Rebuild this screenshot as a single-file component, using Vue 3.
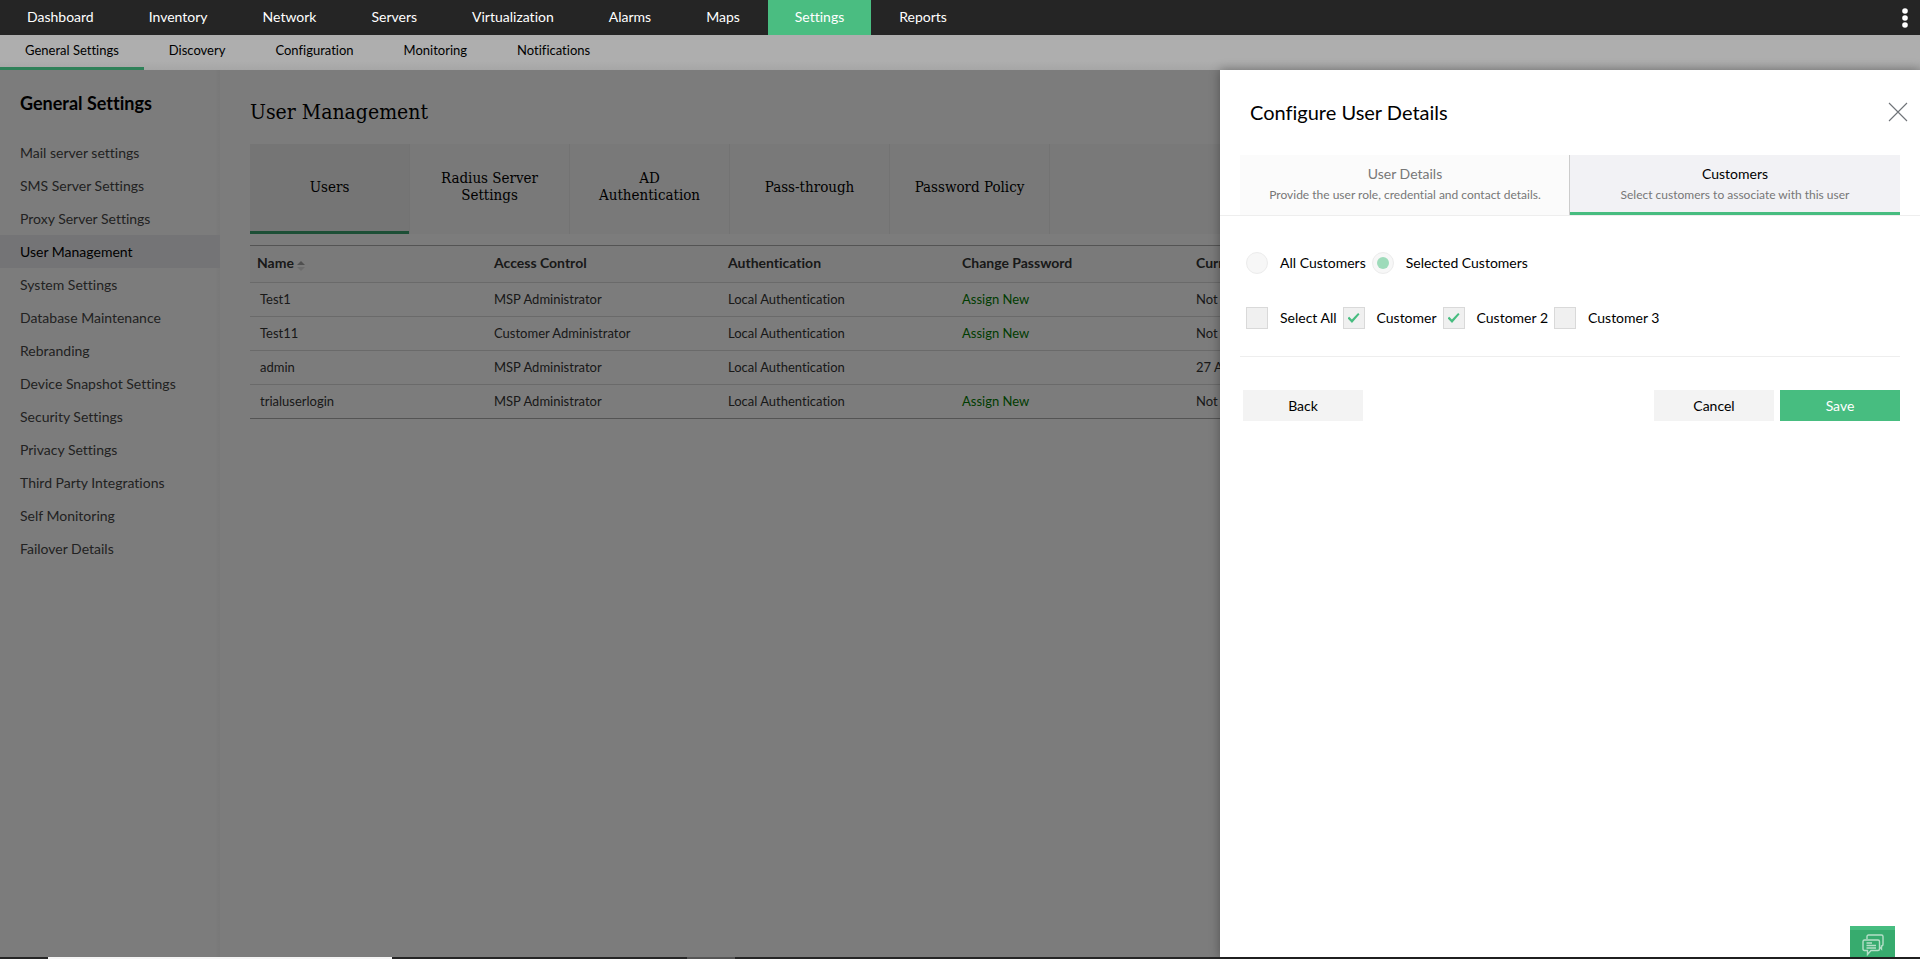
<template>
  <div class="app-page">
    <header class="topbar">
      <nav class="main-nav">
        <a
          v-for="item in mainMenu"
          :key="item"
          href="#"
          :class="{ active: item === 'Settings' }"
        >{{ item }}</a>
      </nav>
      <button class="more-btn" type="button" aria-label="More">
        <svg width="6" height="20" viewBox="0 0 6 20" fill="#fff">
          <circle cx="3" cy="3" r="2.8" />
          <circle cx="3" cy="10" r="2.8" />
          <circle cx="3" cy="17" r="2.8" />
        </svg>
      </button>
    </header>

    <nav class="sub-nav">
      <a
        v-for="item in subMenu"
        :key="item"
        href="#"
        :class="{ active: item === 'General Settings' }"
      >{{ item }}</a>
    </nav>

    <div class="workspace">
      <aside class="sidebar">
        <h2>General Settings</h2>
        <a
          v-for="item in sideMenu"
          :key="item"
          href="#"
          :class="{ active: item === 'User Management' }"
        >{{ item }}</a>
      </aside>

      <main class="content">
        <h1>User Management</h1>
        <div class="tabs">
          <button
            v-for="tab in tabs"
            :key="tab"
            type="button"
            :class="{ active: tab === 'Users' }"
          ><span>{{ tab }}</span></button>
        </div>

        <table class="user-table">
          <thead>
            <tr>
              <th class="name-col">
                Name
                <svg class="sort" width="8" height="10" viewBox="0 0 8 10">
                  <path d="M0 4 L4 0 L8 4 Z" fill="#a0a0a0" />
                  <path d="M0 6 L4 10 L8 6 Z" fill="#d8d8d8" />
                </svg>
              </th>
              <th>Access Control</th>
              <th>Authentication</th>
              <th>Change Password</th>
              <th class="rest-col">Curr</th>
            </tr>
          </thead>
          <tbody>
            <tr v-for="user in users" :key="user.name">
              <td>{{ user.name }}</td>
              <td>{{ user.access }}</td>
              <td>Local Authentication</td>
              <td><a v-if="user.assign" href="#">Assign New</a></td>
              <td>{{ user.login }}</td>
            </tr>
          </tbody>
        </table>
      </main>

      <div class="overlay"></div>

      <section class="panel">
        <div class="panel-head">
          <h2>Configure User Details</h2>
          <button class="close-btn" type="button" aria-label="Close">
            <svg width="20" height="20" viewBox="0 0 20 20" stroke="#6f7378" stroke-width="1.1">
              <path d="M1 1 L19 19 M19 1 L1 19" />
            </svg>
          </button>
        </div>

        <div class="steps">
          <button type="button">
            <span class="step-title">User Details</span>
            <span class="step-desc">Provide the user role, credential and contact details.</span>
          </button>
          <button type="button" class="active">
            <span class="step-title">Customers</span>
            <span class="step-desc">Select customers to associate with this user</span>
          </button>
        </div>

        <div class="form">
          <div class="options">
            <label><input v-model="scope" type="radio" value="all" />All Customers</label>
            <label><input v-model="scope" type="radio" value="selected" />Selected Customers</label>
          </div>
          <div class="options checks">
            <label v-for="c in customers" :key="c.label">
              <input v-model="c.checked" type="checkbox" />{{ c.label }}
            </label>
          </div>
          <div class="actions">
            <button type="button">Back</button>
            <button type="button" class="cancel">Cancel</button>
            <button type="button" class="save">Save</button>
          </div>
        </div>
      </section>

      <button class="chat-btn" type="button" aria-label="Chat">
        <svg width="22" height="22" viewBox="0 0 22 22" fill="none" stroke="#b5dfc8" stroke-width="1.4">
          <path d="M5 5 V2.5 Q5 1 6.500 1 H19.500 Q21 1 21 2.500 V10 Q21 12 19.500 12 V15 L17.500 13" />
          <path d="M2.500 6 H16 Q17.500 6 17.500 7.500 V15 Q17.500 16.500 16 16.500 H9 L5.500 20.500 V16.500 H2.500 Q1 16.500 1 15 V7.500 Q1 6 2.500 6 Z" />
          <path d="M4.500 9 H10 M4.500 11.500 H14 M4.500 14 H14" />
        </svg>
      </button>
    </div>

    <footer class="taskbar">
      <span class="task-search"></span>
      <span class="task-app"></span>
    </footer>
  </div>
</template>

<script setup>
import { ref } from 'vue'

const mainMenu = ['Dashboard', 'Inventory', 'Network', 'Servers', 'Virtualization', 'Alarms', 'Maps', 'Settings', 'Reports']
const subMenu = ['General Settings', 'Discovery', 'Configuration', 'Monitoring', 'Notifications']
const sideMenu = [
  'Mail server settings',
  'SMS Server Settings',
  'Proxy Server Settings',
  'User Management',
  'System Settings',
  'Database Maintenance',
  'Rebranding',
  'Device Snapshot Settings',
  'Security Settings',
  'Privacy Settings',
  'Third Party Integrations',
  'Self Monitoring',
  'Failover Details'
]
const tabs = ['Users', 'Radius Server Settings', 'AD Authentication', 'Pass-through', 'Password Policy']

const users = [
  { name: 'Test1', access: 'MSP Administrator', assign: true, login: 'Not' },
  { name: 'Test11', access: 'Customer Administrator', assign: true, login: 'Not' },
  { name: 'admin', access: 'MSP Administrator', assign: false, login: '27 A' },
  { name: 'trialuserlogin', access: 'MSP Administrator', assign: true, login: 'Not' }
]

const scope = ref('selected')
const customers = ref([
  { label: 'Select All', checked: false },
  { label: 'Customer', checked: true },
  { label: 'Customer 2', checked: true },
  { label: 'Customer 3', checked: false }
])
</script>

<style>
body {
  margin: 0;
}
</style>

<style scoped>
.app-page {
  display: flex;
  flex-direction: column;
  height: 100vh;
  overflow: hidden;
  font-family: Lato, "Open Sans", sans-serif;
  font-size: 14px;
  line-height: 17px;
  font-variant-ligatures: none;
  color: #000;
}

a {
  color: inherit;
  text-decoration: none;
}

button {
  margin: 0;
  padding: 0;
  border: 0;
  background: none;
  font: inherit;
  font-variant-ligatures: none;
  color: inherit;
  cursor: pointer;
}

svg {
  display: block;
}

h1,
h2 {
  margin: 0;
  font-weight: 400;
}

.topbar {
  display: flex;
  justify-content: space-between;
  flex: none;
  height: 35px;
  background: #252525;
  color: #fff;
}

.main-nav {
  display: flex;
  gap: 1px;
}

.main-nav a {
  padding: 8px 27px 10px;
}

.main-nav a.active {
  background: #4abd81;
}

.more-btn {
  padding: 0 12px;
}

.sub-nav {
  display: flex;
  flex: none;
  height: 35px;
  background: linear-gradient(#aeaeae 26px, #a6a6a6);
  font-size: 13px;
}

.sub-nav a {
  box-sizing: border-box;
  height: 35px;
  padding: 7px 25px;
}

.sub-nav a.active {
  border-bottom: 3px solid #2f8159;
}

.workspace {
  position: relative;
  display: flex;
  flex: 1;
  min-height: 0;
  background: #f9f9f9;
}

.sidebar {
  box-sizing: border-box;
  width: 220px;
  flex: none;
  background: linear-gradient(to left, #f1f1f1, #f9f9f9 5px);
  color: #444;
}

.sidebar h2 {
  padding: 22px 20px 21px;
  font-size: 18px;
  line-height: 23px;
  font-weight: 700;
  color: #000;
}

.sidebar a {
  display: block;
  padding: 8px 20px;
}

.sidebar a.active {
  background: #e9e9ed;
  color: #000;
}

.content {
  flex: 1;
  min-width: 0;
  padding: 0 30px;
}

.content h1 {
  padding: 30px 0 19px;
  font-family: "DejaVu Serif Condensed", "DejaVu Serif", serif;
  font-size: 21px;
  line-height: 25px;
}

.tabs {
  display: flex;
  height: 90px;
  background: #f3f3f3;
}

.tabs button {
  box-sizing: border-box;
  width: 160px;
  padding: 0 18px 4px;
  border-right: 1px solid #e6e6e6;
  font-family: "DejaVu Serif Condensed", "DejaVu Serif", serif;
  font-size: 15px;
}

.tabs button.active {
  background: #ebebeb;
  box-shadow: inset 0 -3px #3a9e6c;
}

.user-table {
  width: 100%;
  margin-top: 11px;
  border-collapse: collapse;
  table-layout: fixed;
  border-top: 1px solid #a8a8a8;
  border-bottom: 1px solid #a8a8a8;
  color: #333;
}

th,
td {
  width: 234px;
  box-sizing: border-box;
  padding: 0 10px;
  text-align: left;
  white-space: nowrap;
}

th {
  height: 37px;
  padding-bottom: 4px;
  background: #f5f5f5;
  font-weight: 700;
}

th.name-col {
  padding-left: 7px;
}

th.rest-col {
  width: auto;
}

.sort {
  display: inline-block;
  vertical-align: -3px;
}

td {
  height: 34px;
  border-top: 1px solid #d5d5d5;
  font-size: 13px;
}

td a {
  color: #007a00;
}

.overlay {
  position: absolute;
  inset: 0;
  background: rgba(0, 0, 0, 0.5);
}

.panel {
  position: absolute;
  top: 0;
  right: 0;
  bottom: 0;
  width: 700px;
  background: #fff;
  box-shadow: 0 0 10px rgba(0, 0, 0, 0.35);
}

.panel-head {
  display: flex;
  align-items: flex-start;
  justify-content: space-between;
  padding: 30px 12px 30px 30px;
}

.panel-head h2 {
  font-size: 20px;
  line-height: 25px;
}

.close-btn {
  margin-top: 2px;
}

.steps {
  display: flex;
  padding: 0 20px;
  border-bottom: 1px solid #eee;
}

.steps button {
  box-sizing: border-box;
  flex: 1;
  height: 60px;
  padding-bottom: 3px;
  background: #fbfbfb;
  color: #777;
}

.steps button.active {
  background: #f2f2f5;
  box-shadow: inset 0 -3px #47bd80, -1px 0 #ccc;
}

.steps .active .step-title {
  color: #000;
}

.step-title,
.step-desc {
  display: block;
  line-height: 21px;
}

.step-desc {
  font-size: 12px;
}

.form {
  padding: 36px 20px 0;
}

.options {
  display: flex;
  gap: 6px;
  padding: 0 6px 33px;
}

.options.checks {
  padding-bottom: 27px;
  border-bottom: 1px solid #eee;
}

.options label {
  display: flex;
  align-items: center;
  gap: 12px;
  height: 22px;
  line-height: 20px;
}

.options input {
  appearance: none;
  display: grid;
  place-items: center;
  box-sizing: border-box;
  width: 22px;
  height: 22px;
  margin: 0;
  border: 1px solid #d9d9d9;
  background: #f0f0f0;
}

.options input[type="radio"] {
  border-color: #ececec;
  border-radius: 50%;
  background: #f7f7f7;
}

.options input[type="radio"]:checked::after {
  content: "";
  width: 12px;
  height: 12px;
  border-radius: 50%;
  background: #9edbba;
}

.options input[type="checkbox"]:checked::after {
  content: "";
  width: 12px;
  height: 10px;
  background: #47bd80;
  clip-path: polygon(0 52%, 14% 38%, 36% 66%, 88% 0, 100% 12%, 37% 100%);
}

.actions {
  display: flex;
  gap: 6px;
  padding: 33px 0 0 3px;
}

.actions button {
  width: 120px;
  height: 31px;
  background: #f3f3f3;
}

.actions .cancel {
  margin-left: auto;
}

.actions .save {
  background: #47bd80;
  color: #fff;
}

.chat-btn {
  position: absolute;
  right: 25px;
  bottom: 0;
  display: flex;
  justify-content: center;
  width: 45px;
  height: 31px;
  padding-top: 4px;
  border-top: 4px solid #47bd80;
  background: #37ab6e;
}

.taskbar {
  display: flex;
  flex: none;
  height: 2px;
  padding-left: 48px;
  background: #252525;
}

.task-search {
  width: 344px;
  background: #f5f5f5;
}

.task-app {
  width: 48px;
  margin-left: 295px;
  background: #555;
}
</style>
